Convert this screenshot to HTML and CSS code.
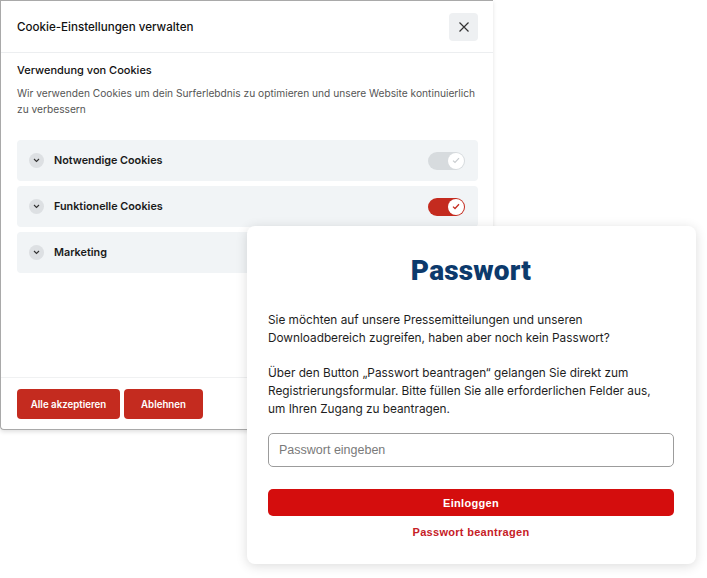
FILE: index.html
```html
<!DOCTYPE html>
<html lang="de">
<head>
    <meta charset="UTF-8">
    <title>Cookie-Einstellungen & Passwort</title>
    <link rel="stylesheet" href="styles.css">
</head>
<body>
    <div class="stage">
        <div class="cookie-modal">
            <div class="modal-header">
                <h2>Cookie-Einstellungen verwalten</h2>
                <button class="close-btn" aria-label="Schließen">
                    <svg width="12" height="12" viewBox="0 0 12 12"><path d="M1.5 1.5 L10.5 10.5 M10.5 1.5 L1.5 10.5" stroke="#333" stroke-width="1.2" fill="none"/></svg>
                </button>
            </div>
            <div class="modal-body">
                <h3>Verwendung von Cookies</h3>
                <p class="intro">Wir verwenden Cookies um dein Surferlebdnis zu optimieren und unsere Website kontinuierlich zu verbessern</p>
                <div class="cookie-list">
                    <div class="cookie-item">
                        <span class="chevron"><svg width="7" height="5" viewBox="0 0 7 5"><path d="M1 1 L3.5 3.5 L6 1" stroke="#333" stroke-width="1.1" fill="none"/></svg></span>
                        <span class="cookie-label">Notwendige Cookies</span>
                        <span class="toggle locked"><span class="knob"><svg width="8" height="7" viewBox="0 0 8 7"><path d="M1 3.6 L3 5.5 L7 1.2" stroke="#c8cccf" stroke-width="1.2" fill="none"/></svg></span></span>
                    </div>
                    <div class="cookie-item">
                        <span class="chevron"><svg width="7" height="5" viewBox="0 0 7 5"><path d="M1 1 L3.5 3.5 L6 1" stroke="#333" stroke-width="1.1" fill="none"/></svg></span>
                        <span class="cookie-label">Funktionelle Cookies</span>
                        <span class="toggle on"><span class="knob"><svg width="8" height="7" viewBox="0 0 8 7"><path d="M1 3.6 L3 5.5 L7 1.2" stroke="#c42b1f" stroke-width="1.3" fill="none"/></svg></span></span>
                    </div>
                    <div class="cookie-item">
                        <span class="chevron"><svg width="7" height="5" viewBox="0 0 7 5"><path d="M1 1 L3.5 3.5 L6 1" stroke="#333" stroke-width="1.1" fill="none"/></svg></span>
                        <span class="cookie-label">Marketing</span>
                        <span class="toggle"><span class="knob"></span></span>
                    </div>
                </div>
            </div>
            <div class="modal-footer">
                <button class="btn-red">Alle akzeptieren</button>
                <button class="btn-red">Ablehnen</button>
            </div>
        </div>

        <div class="password-card">
            <h1>Passwort</h1>
            <p>Sie möchten auf unsere Pressemitteilungen und unseren Downloadbereich zugreifen, haben aber noch kein Passwort?</p>
            <p>Über den Button „Passwort beantragen“ gelangen Sie direkt zum Registrierungsformular. Bitte füllen Sie alle erforderlichen Felder aus, um Ihren Zugang zu beantragen.</p>
            <input type="password" class="pw-input" placeholder="Passwort eingeben">
            <button class="login-btn">Einloggen</button>
            <a href="#" class="request-link">Passwort beantragen</a>
        </div>
    </div>
</body>
</html>
```

FILE: styles.css
```css
body {
    margin: 0;
    background: #fff;
    font-family: Inter, "Noto Sans", sans-serif;
    color: #1c1c1c;
}

.stage {
    position: relative;
    width: 707px;
    height: 578px;
    overflow: hidden;
}

.cookie-modal {
    width: 493px;
    height: 430px;
    box-sizing: border-box;
    border: 1px solid #a9a9a9;
    border-right: none;
    border-radius: 0 0 4px 4px;
    background: #fff;
    box-shadow: 0 2px 4px rgba(0,0,0,0.12);
    display: flex;
    flex-direction: column;
}

.modal-header {
    height: 51px;
    display: flex;
    align-items: center;
    justify-content: space-between;
    padding: 0 15px 0 16px;
    border-bottom: 1px solid #eceef0;
}

.modal-header h2 {
    margin: 0;
    font-size: 11.6px;
    font-weight: 500;
    color: #111;
}

.close-btn {
    width: 29px;
    height: 28px;
    border: none;
    border-radius: 4px;
    background: #eef0f2;
    display: flex;
    align-items: center;
    justify-content: center;
    padding: 0;
}

.modal-body {
    flex: 1;
    padding: 9px 15px 0 16px;
}

.modal-body h3 {
    margin: 0;
    font-size: 11px;
    font-weight: 500;
    line-height: 16px;
    color: #111;
}

.intro {
    margin: 7px 0 0;
    font-size: 10.2px;
    line-height: 16px;
    color: #555;
}

.cookie-list {
    margin-top: 23px;
    display: flex;
    flex-direction: column;
    gap: 5px;
}

.cookie-item {
    height: 41px;
    background: #f1f4f6;
    border-radius: 4px;
    display: flex;
    align-items: center;
    padding: 0 12px 0 12px;
}

.chevron {
    width: 15px;
    height: 15px;
    border-radius: 50%;
    background: #dde0e3;
    display: flex;
    align-items: center;
    justify-content: center;
}

.cookie-label {
    flex: 1;
    margin-left: 10px;
    font-size: 10.8px;
    font-weight: 600;
    color: #1a1a1a;
}

.toggle {
    width: 37px;
    height: 18px;
    border-radius: 9px;
    background: #d7dbde;
    display: flex;
    align-items: center;
    justify-content: flex-end;
    padding: 1px;
    box-sizing: border-box;
    margin-right: 1px;
}

.toggle .knob {
    width: 16px;
    height: 16px;
    border-radius: 50%;
    background: #fff;
    display: flex;
    align-items: center;
    justify-content: center;
}

.toggle.on {
    background: #c42b1f;
}

.modal-footer {
    border-top: 1px solid #f0f1f2;
    padding: 11px 16px 10px;
    display: flex;
    gap: 4px;
}

.btn-red {
    height: 30px;
    padding: 0;
    width: 103px;
    border: none;
    border-radius: 4px;
    background: #c42b1f;
    color: #fff;
    font-family: Inter, sans-serif;
    font-size: 9.7px;
    font-weight: 600;
}

.btn-red:last-child {
    width: 79px;
}

.password-card {
    position: absolute;
    left: 247px;
    top: 226px;
    width: 449px;
    height: 338px;
    box-sizing: border-box;
    padding: 29px 22px 0 21px;
    background: #fff;
    border-radius: 8px;
    box-shadow: 0 2px 12px rgba(0,0,0,0.14);
    display: flex;
    flex-direction: column;
}

.password-card h1 {
    margin: 0;
    text-align: center;
    font-family: Roboto, sans-serif;
    font-size: 28px;
    font-weight: 900;
    line-height: 31px;
    letter-spacing: 0.2px;
    color: #0c3a6c;
}

.password-card p {
    margin: 0;
    max-width: 392px;
    font-size: 11.8px;
    line-height: 18px;
    color: #1e1e1e;
}

.password-card h1 + p {
    margin-top: 25px;
}

.password-card p + p {
    margin-top: 17px;
}

.pw-input {
    margin-top: 15px;
    height: 34px;
    box-sizing: border-box;
    border: 1px solid #9c9c9c;
    border-radius: 5px;
    padding: 0 10px;
    font-family: "Liberation Sans", sans-serif;
    font-size: 12.5px;
}

.pw-input::placeholder {
    color: #7a7a7a;
}

.login-btn {
    margin-top: 22px;
    height: 27px;
    border: none;
    border-radius: 5px;
    background: #d40d0d;
    color: #fff;
    font-family: "Liberation Sans", sans-serif;
    font-size: 11px;
    font-weight: 700;
    letter-spacing: 0.3px;
}

.request-link {
    margin-top: 10px;
    text-align: center;
    color: #c62026;
    font-family: "Liberation Sans", sans-serif;
    font-size: 11px;
    font-weight: 700;
    letter-spacing: 0.3px;
    text-decoration: none;
}
```
